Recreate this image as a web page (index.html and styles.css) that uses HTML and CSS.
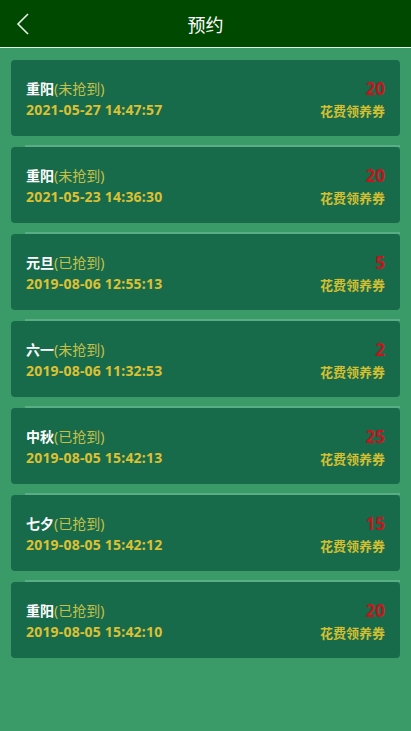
FILE: index.html
```html
<!DOCTYPE html>
<html lang="zh">
<head>
  <meta charset="UTF-8" />
  <meta name="viewport" content="width=device-width, initial-scale=1.0" />
  <title>预约</title>
  <link rel="stylesheet" href="styles.css">
</head>
<body>
  <header class="topbar">
    <a class="back" href="#">
      <svg width="14" height="22" viewBox="0 0 14 22"><path d="M12 1 L2 11 L12 21" fill="none" stroke="#e8f0e8" stroke-width="1.6"/></svg>
    </a>
    <h1 class="title">预约</h1>
  </header>

  <div class="list">
    <div class="item">
      <div class="info">
        <div class="name">重阳<span class="state">(未抢到)</span></div>
        <div class="time">2021-05-27 14:47:57</div>
      </div>
      <div class="reward">
        <div class="num">20</div>
        <div class="label">花费领养券</div>
      </div>
    </div>

    <div class="item">
      <div class="info">
        <div class="name">重阳<span class="state">(未抢到)</span></div>
        <div class="time">2021-05-23 14:36:30</div>
      </div>
      <div class="reward">
        <div class="num">20</div>
        <div class="label">花费领养券</div>
      </div>
    </div>

    <div class="item">
      <div class="info">
        <div class="name">元旦<span class="state">(已抢到)</span></div>
        <div class="time">2019-08-06 12:55:13</div>
      </div>
      <div class="reward">
        <div class="num">5</div>
        <div class="label">花费领养券</div>
      </div>
    </div>

    <div class="item">
      <div class="info">
        <div class="name">六一<span class="state">(未抢到)</span></div>
        <div class="time">2019-08-06 11:32:53</div>
      </div>
      <div class="reward">
        <div class="num">2</div>
        <div class="label">花费领养券</div>
      </div>
    </div>

    <div class="item">
      <div class="info">
        <div class="name">中秋<span class="state">(已抢到)</span></div>
        <div class="time">2019-08-05 15:42:13</div>
      </div>
      <div class="reward">
        <div class="num">25</div>
        <div class="label">花费领养券</div>
      </div>
    </div>

    <div class="item">
      <div class="info">
        <div class="name">七夕<span class="state">(已抢到)</span></div>
        <div class="time">2019-08-05 15:42:12</div>
      </div>
      <div class="reward">
        <div class="num">15</div>
        <div class="label">花费领养券</div>
      </div>
    </div>

    <div class="item">
      <div class="info">
        <div class="name">重阳<span class="state">(已抢到)</span></div>
        <div class="time">2019-08-05 15:42:10</div>
      </div>
      <div class="reward">
        <div class="num">20</div>
        <div class="label">花费领养券</div>
      </div>
    </div>
  </div>
</body>
</html>
```

FILE: styles.css
```css
body {
  margin: 0;
  background: #3a9b69;
  font-family: "Noto Sans", "Noto Sans CJK SC", sans-serif;
}
.topbar {
  height: 47px;
  background: #004900;
  border-bottom: 1px solid #dfeee3;
  display: flex;
  align-items: center;
  justify-content: center;
  position: relative;
}
.back {
  position: absolute;
  left: 16px;
  top: 13px;
  display: block;
  line-height: 0;
}
.title {
  margin: 0;
  color: #fff;
  font-size: 18px;
  font-weight: normal;
}
.list {
  padding: 12px 11px;
  display: flex;
  flex-direction: column;
  gap: 11px;
}
.item {
  position: relative;
  height: 76px;
  box-sizing: border-box;
  background: #176b4b;
  border-radius: 4px;
  padding: 0 15px;
  display: flex;
  justify-content: space-between;
  align-items: center;
}
.item + .item::before {
  content: "";
  position: absolute;
  top: -2px;
  left: 14px;
  right: 0;
  height: 2px;
  background: #5aae86;
}
.info {
  padding-top: 4px;
}
.name {
  color: #fff;
  font-size: 14px;
  font-weight: bold;
  line-height: 20px;
}
.state {
  color: #c6c049;
  font-weight: normal;
}
.time {
  color: #dcc034;
  font-size: 14px;
  font-weight: bold;
  line-height: 22px;
  letter-spacing: 0.2px;
}
.reward {
  text-align: right;
  padding-top: 4px;
}
.num {
  color: #c4161c;
  font-size: 17px;
  font-weight: bold;
  line-height: 22px;
}
.label {
  color: #d4bf31;
  font-size: 13px;
  font-weight: bold;
  line-height: 22px;
}
```
